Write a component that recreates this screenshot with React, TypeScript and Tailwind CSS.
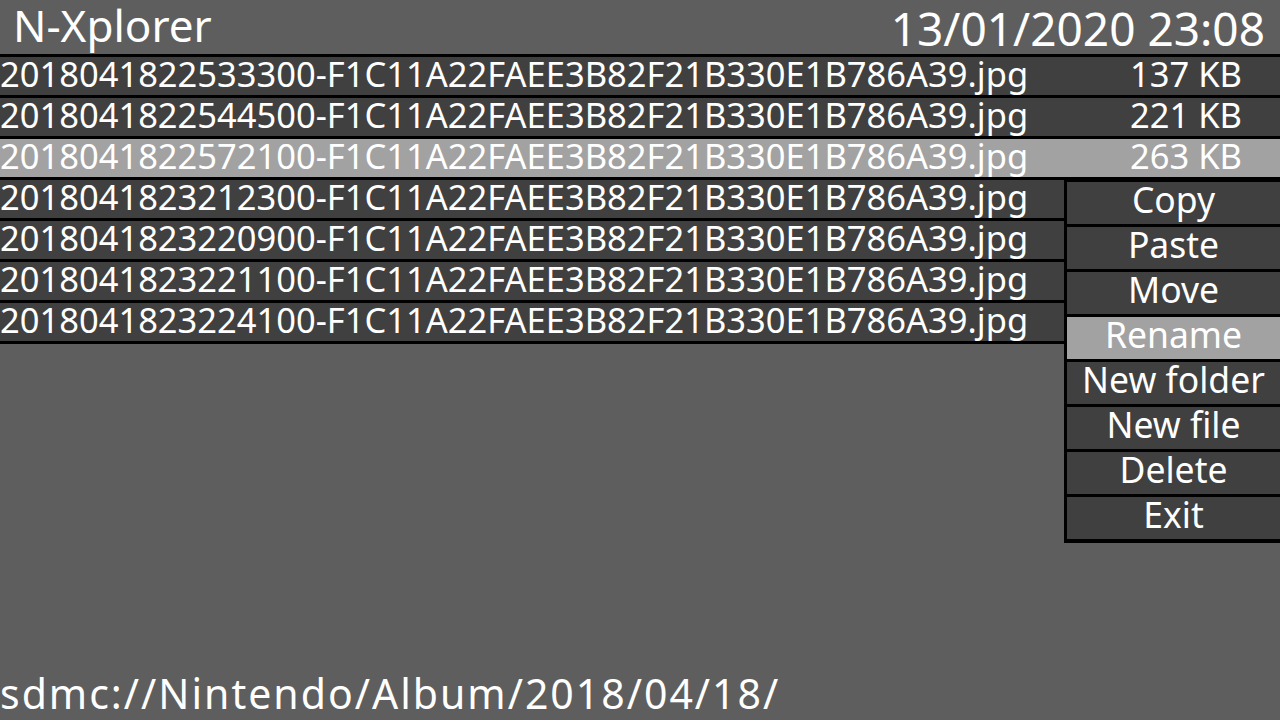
const files = [
  { name: '2018041822533300-F1C11A22FAEE3B82F21B330E1B786A39.jpg', size: '137 KB' },
  { name: '2018041822544500-F1C11A22FAEE3B82F21B330E1B786A39.jpg', size: '221 KB' },
  { name: '2018041822572100-F1C11A22FAEE3B82F21B330E1B786A39.jpg', size: '263 KB' },
  { name: '2018041823212300-F1C11A22FAEE3B82F21B330E1B786A39.jpg', size: '' },
  { name: '2018041823220900-F1C11A22FAEE3B82F21B330E1B786A39.jpg', size: '' },
  { name: '2018041823221100-F1C11A22FAEE3B82F21B330E1B786A39.jpg', size: '' },
  { name: '2018041823224100-F1C11A22FAEE3B82F21B330E1B786A39.jpg', size: '' },
]

const menuItems = ['Copy', 'Paste', 'Move', 'Rename', 'New folder', 'New file', 'Delete', 'Exit']

const selectedFile = 2
const selectedMenu = 3

export default function App() {
  return (
    <div
      className="relative flex h-screen w-full flex-col overflow-hidden bg-[#5e5e5e] text-white"
      style={{ fontFamily: '"Noto Sans", "Open Sans", sans-serif' }}
    >
      <header className="flex h-[54px] items-start justify-between">
        <span className="pl-[13px] text-[44px] leading-[50px]">N-Xplorer</span>
        <span className="pr-[15px] text-[46px] leading-[56px]">13/01/2020 23:08</span>
      </header>

      <ul className="border-b-[3px] border-black">
        {files.map((f, i) => (
          <li
            key={f.name}
            className={`flex h-[41px] border-t-[3px] border-black text-[34.5px] leading-[33px] ${
              i === selectedFile ? 'bg-[#a2a2a2]' : 'bg-[#404040]'
            }`}
          >
            <span className="flex-1 whitespace-nowrap">{f.name}</span>
            <span className="w-[150px] whitespace-nowrap">{f.size}</span>
          </li>
        ))}
      </ul>

      <div className="flex-1" />

      <footer className="text-[41px] leading-[54px] tracking-[2px]">sdmc://Nintendo/Album/2018/04/18/</footer>

      <div className="absolute left-[1064px] right-0 top-[179px] flex flex-col gap-[3px] bg-black pb-[4px] pl-[3px] pt-[3px]">
        {menuItems.map((m, i) => (
          <div
            key={m}
            className={`h-[42px] text-center text-[35.5px] leading-[35px] ${
              i === selectedMenu ? 'bg-[#a2a2a2]' : 'bg-[#404040]'
            }`}
          >
            {m}
          </div>
        ))}
      </div>
    </div>
  )
}
